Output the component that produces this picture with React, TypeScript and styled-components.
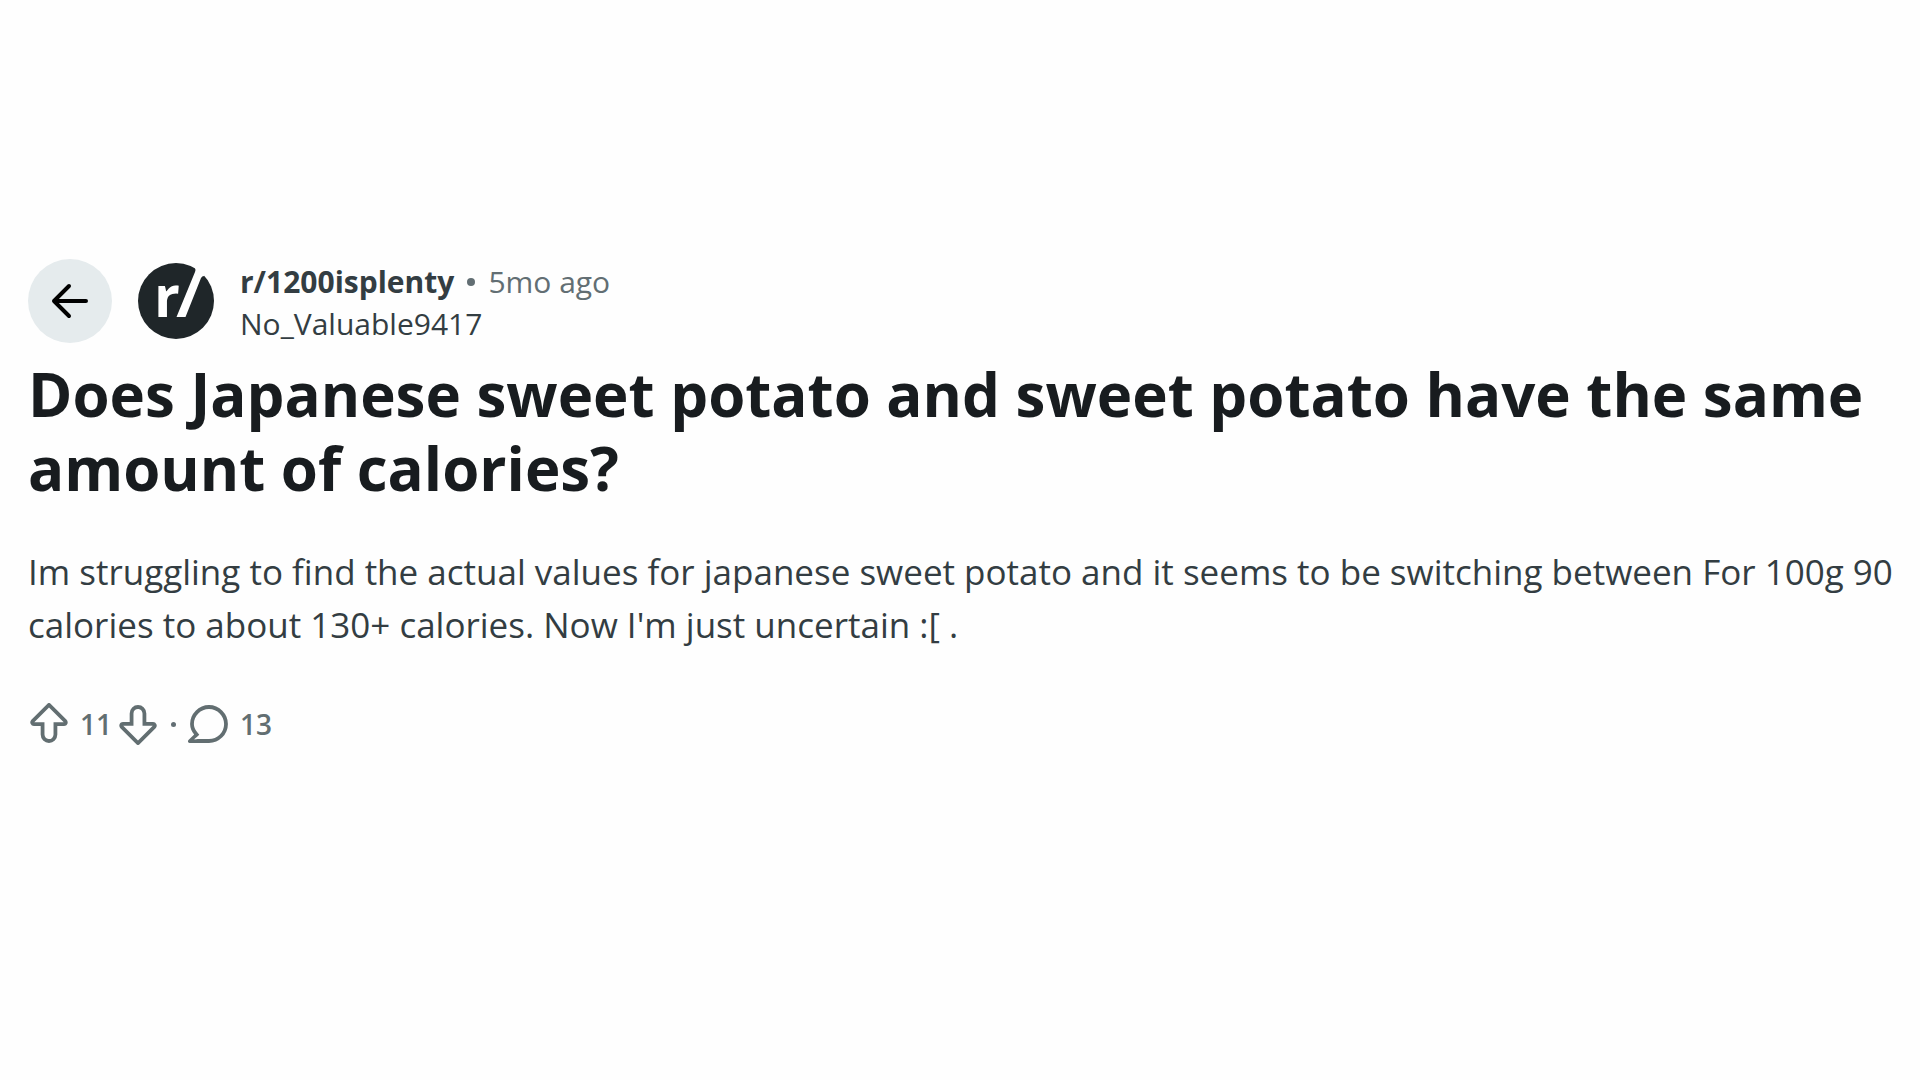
import React from "react";
import styled, { createGlobalStyle } from "styled-components";

const GlobalStyle = createGlobalStyle`
  * { box-sizing: border-box; }
  body {
    margin: 0;
    background: #fefefe;
    font-family: "Open Sans", "Noto Sans", sans-serif;
    color: #333d42;
  }
`;

const Post = styled.article`
  padding: 257px 12px 40px 28px;
`;

const Header = styled.header`
  display: flex;
  align-items: center;
  gap: 26px;
`;

const BackButton = styled.button`
  display: grid;
  place-items: center;
  width: 84px;
  height: 84px;
  padding: 0;
  border: 0;
  border-radius: 50%;
  background: #e5ebed;
  color: #000;
  cursor: pointer;
`;

const Avatar = styled.svg`
  display: block;
  width: 76px;
  height: 76px;
  overflow: visible;
`;

const Credit = styled.div`
  display: flex;
  flex-direction: column;
  padding-top: 4px;
  font-size: 30px;
  line-height: 42px;
`;

const CreditLine = styled.div`
  display: flex;
  align-items: center;
  gap: 13px;
`;

const TextLink = styled.a<{ $strong?: boolean }>`
  color: #333d42;
  font-weight: ${(p) => (p.$strong ? 700 : 400)};
  text-decoration: none;
`;

const Age = styled.time`
  color: #626e73;
`;

const Dot = styled.span<{ $size: number }>`
  width: ${(p) => p.$size}px;
  height: ${(p) => p.$size}px;
  border-radius: 50%;
  background: #626e73;
`;

const Title = styled.h1`
  margin: 12px 0 0;
  color: #181c1f;
  font-size: 60px;
  font-weight: 680;
  line-height: 74px;
`;

const Body = styled.p`
  margin: 40px 0 0;
  font-size: 35px;
  line-height: 53px;
`;

const Actions = styled.footer`
  display: flex;
  align-items: center;
  gap: 12px;
  margin-top: 52px;
  color: #626e71;
`;

const Votes = styled.div`
  display: flex;
  align-items: center;
  gap: 5px;
`;

const Action = styled.button`
  display: flex;
  align-items: center;
  gap: 10px;
  padding: 0;
  border: 0;
  background: none;
  color: inherit;
  font: 600 28px/42px "Open Sans", "Noto Sans", sans-serif;
  cursor: pointer;
`;

const Icon = styled.svg<{ $flip?: boolean }>`
  display: block;
  width: 42px;
  height: 42px;
  fill: currentColor;
  transform: ${(p) => (p.$flip ? "rotate(180deg)" : "none")};
`;

const VOTE =
  "M10 19a3.966 3.966 0 01-3.96-3.962V10.98H2.838a1.731 1.731 0 01-1.605-1.073 1.734 1.734 0 01.377-1.895L9.364.254a.925.925 0 011.272 0l7.754 7.759c.498.499.646 1.242.376 1.894-.27.652-.9 1.073-1.605 1.073h-3.202v4.058A3.965 3.965 0 019.999 19H10zM2.989 9.179H7.84v5.731c0 1.13.81 2.163 1.934 2.278a2.163 2.163 0 002.386-2.15V9.179h4.851L10 2.163 2.989 9.179z";
const COMMENT =
  "M10 1a9 9 0 00-9 9c0 1.947.79 3.58 1.935 4.957L.231 17.661A.784.784 0 00.785 19H10a9 9 0 009-9 9 9 0 00-9-9zm0 16.2H6.162c-.994.004-1.907.053-3.045.144l-.076-.188a36.981 36.981 0 002.328-2.087l-1.05-1.263C3.297 12.576 2.8 11.331 2.8 10c0-3.97 3.23-7.2 7.2-7.2s7.2 3.23 7.2 7.2-3.23 7.2-7.2 7.2z";

export default function App() {
  return (
    <>
      <GlobalStyle />
      <Post>
        <Header>
          <BackButton aria-label="Back">
            <svg width="42" height="42" viewBox="0 0 42 42" fill="none" stroke="currentColor" strokeWidth="4" strokeLinecap="round" strokeLinejoin="round">
              <path d="M37 21H5M20 6L5 21l15 15" />
            </svg>
          </BackButton>
          <Avatar viewBox="0 0 76 76" aria-hidden="true">
            <circle cx="38" cy="38" r="38" fill="#1f2629" />
            <text x="16" y="54" fill="#fff" fontFamily="Open Sans" fontWeight="700" fontSize="57">r</text>
            <path d="M38.5 54h9L63 15q1-2 3-2L71 0H58L57 5q1 2 0 4z" fill="#fefefe" />
          </Avatar>
          <Credit>
            <CreditLine>
              <TextLink href="#community" $strong>r/1200isplenty</TextLink>
              <Dot $size={8} />
              <Age>5mo ago</Age>
            </CreditLine>
            <CreditLine>
              <TextLink href="#author">No_Valuable9417</TextLink>
            </CreditLine>
          </Credit>
        </Header>
        <Title>Does Japanese sweet potato and sweet potato have the same amount of calories?</Title>
        <Body>
          Im struggling to find the actual values for japanese sweet potato and it seems to be switching between For 100g 90
          calories to about 130+ calories. Now I'm just uncertain :[ .
        </Body>
        <Actions>
          <Votes>
            <Action aria-label="Upvote">
              <Icon viewBox="0 0 20 20"><path d={VOTE} /></Icon>
              11
            </Action>
            <Action aria-label="Downvote">
              <Icon viewBox="0 0 20 20" $flip><path d={VOTE} /></Icon>
            </Action>
          </Votes>
          <Dot $size={5} />
          <Action aria-label="Comments">
            <Icon viewBox="0 0 20 20"><path d={COMMENT} /></Icon>
            13
          </Action>
        </Actions>
      </Post>
    </>
  );
}
